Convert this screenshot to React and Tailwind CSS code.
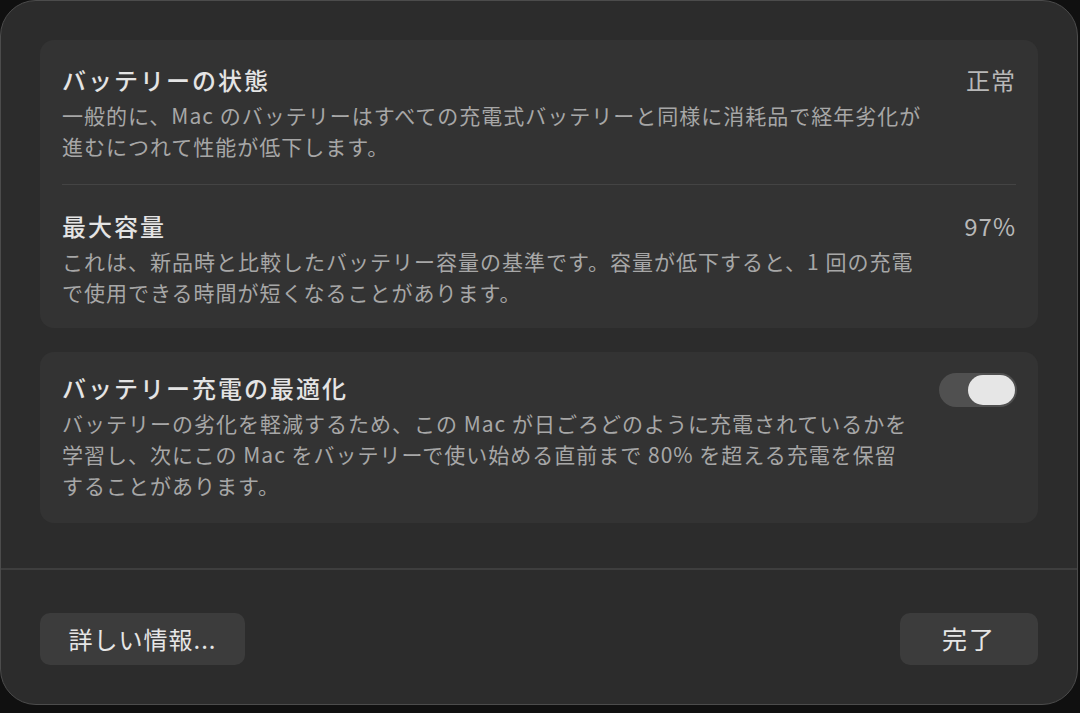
const FONT = { fontFamily: '"Noto Sans CJK JP", "Noto Sans", sans-serif' };

function Row({ title, value, lines, right }) {
  return (
    <div className="flex items-start justify-between">
      <div className="flex flex-col">
        <div className="text-[24px] leading-[30px] font-medium tracking-[2px] text-[#e4e4e4]">{title}</div>
        <div className="mt-[5px] text-[21px] leading-[31px] tracking-[1px] text-[#a7a7a7]">
          {lines.map((l, i) => (
            <div key={i} className="whitespace-nowrap">{l}</div>
          ))}
        </div>
      </div>
      {value && <div className="text-[24px] leading-[30px] tracking-[1px] text-[#b8b8b8]">{value}</div>}
      {right}
    </div>
  );
}

function Toggle() {
  return (
    <div className="mr-[-1px] flex h-[34px] w-[78px] items-center justify-end rounded-full bg-[#505050] px-[2px]">
      <div className="h-[30px] w-[47px] rounded-full bg-[#e6e6e6]" />
    </div>
  );
}

export default function App() {
  return (
    <div className="h-[713px] w-[1080px] overflow-hidden bg-[#101010]" style={FONT}>
      <div className="flex h-[705px] w-[1078px] flex-col rounded-[36px] border border-[#4c4c4c] bg-[#2c2c2c]">
        <div className="flex flex-col gap-[24px] px-[39px] pt-[39px]">
          <div className="flex h-[288px] flex-col rounded-[14px] bg-[#333333] px-[22px] pt-[25px]">
            <Row
              title="バッテリーの状態"
              value="正常"
              lines={[
                '一般的に、Mac のバッテリーはすべての充電式バッテリーと同様に消耗品で経年劣化が',
                '進むにつれて性能が低下します。',
              ]}
            />
            <div className="mt-[22px] mb-[26px] h-px bg-[#444444]" />
            <Row
              title="最大容量"
              value="97%"
              lines={[
                'これは、新品時と比較したバッテリー容量の基準です。容量が低下すると、1 回の充電',
                'で使用できる時間が短くなることがあります。',
              ]}
            />
          </div>
          <div className="flex h-[171px] flex-col rounded-[14px] bg-[#333333] px-[22px] pt-[21px]">
            <Row
              title="バッテリー充電の最適化"
              right={<Toggle />}
              lines={[
                'バッテリーの劣化を軽減するため、この Mac が日ごろどのように充電されているかを',
                '学習し、次にこの Mac をバッテリーで使い始める直前まで 80% を超える充電を保留',
                'することがあります。',
              ]}
            />
          </div>
        </div>
        <div className="mt-[45px] h-[2px] bg-[#3e3e3e]" />
        <div className="flex justify-between px-[39px] pt-[43px]">
          <button className="h-[52px] w-[205px] rounded-[10px] bg-[#3c3c3c] text-[24px] tracking-[1px] text-[#e6e6e6]">
            詳しい情報...
          </button>
          <button className="h-[52px] w-[138px] rounded-[10px] bg-[#3c3c3c] text-[25px] tracking-[2px] text-[#e6e6e6]">
            完了
          </button>
        </div>
      </div>
    </div>
  );
}
